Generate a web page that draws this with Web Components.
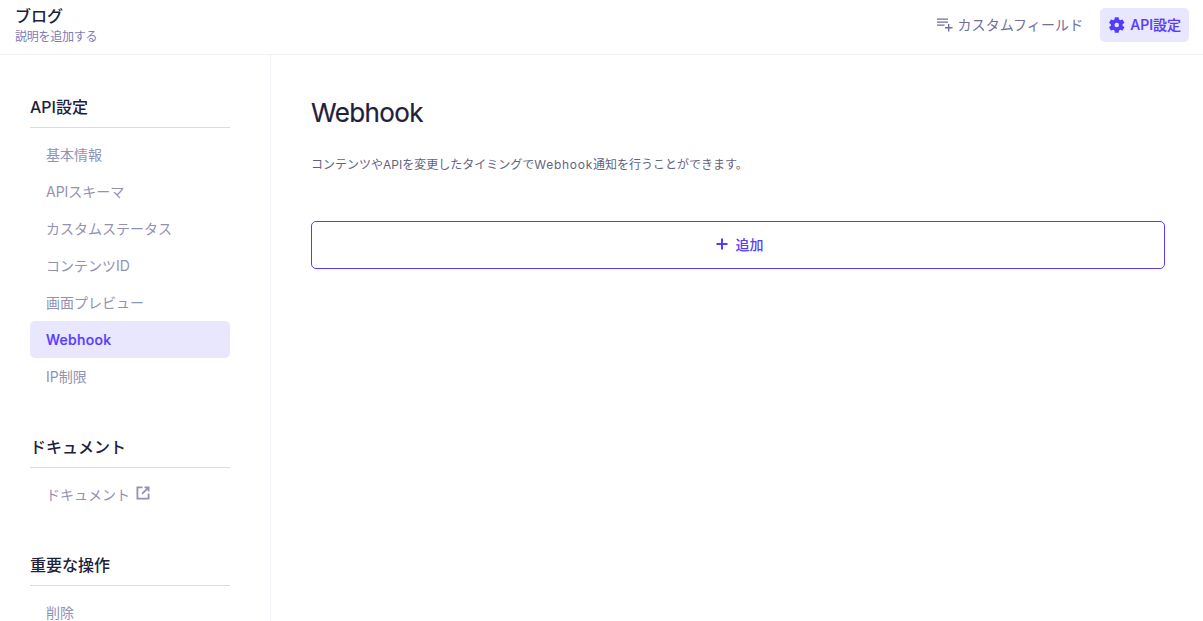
<!DOCTYPE html>
<html lang="ja"><head><meta charset="utf-8"><style>
html,body{margin:0;height:100%;overflow:hidden;background:#fff}
body{font-family:Inter,"Noto Sans CJK JP",sans-serif;color:#21213b}
</style></head><body>
<app-shell>
<app-header slot="header"></app-header>
<side-nav slot="nav">
<nav-section title="API設定">
<nav-item>基本情報</nav-item><nav-item>APIスキーマ</nav-item><nav-item>カスタムステータス</nav-item><nav-item>コンテンツID</nav-item><nav-item>画面プレビュー</nav-item><nav-item active>Webhook</nav-item><nav-item>IP制限</nav-item>
</nav-section>
<nav-section title="ドキュメント"><nav-item external>ドキュメント</nav-item></nav-section>
<nav-section title="重要な操作"><nav-item>削除</nav-item></nav-section>
</side-nav>
<webhook-page slot="main"></webhook-page>
</app-shell>
<script>
function def(name,html,init){customElements.define(name,class extends HTMLElement{constructor(){super();this.attachShadow({mode:'open'}).innerHTML=html;}connectedCallback(){init&&init(this);}});}
def('app-shell',`<style>:host{display:flex;flex-direction:column;height:621px;overflow:hidden}
.body{display:flex;flex:1;min-height:0}</style><slot name="header"></slot><div class="body"><slot name="nav"></slot><slot name="main"></slot></div>`);
def('app-header',`<style>:host{display:flex;flex:none;height:54px;border-bottom:1px solid #f0f0f7;justify-content:space-between;align-items:flex-start;padding:0 14px 0 15px;box-sizing:content-box}
.l{padding-top:6px}
.t{font-size:16px;font-weight:500;line-height:20px;color:#21213b}
.s{font-size:12px;line-height:16px;color:#7c7cb8;margin-top:3px;letter-spacing:-.25px}
.r{display:flex;align-items:center;gap:9px;padding-top:8px}
.b{display:flex;align-items:center;height:34px;padding:0 8px;border-radius:5px;font-size:14px;line-height:20px;color:#6f6f9b;gap:4px}
.b span{letter-spacing:.1px}
.b.a{background:#e9e7fd;color:#563bff;font-weight:500}
.b.a span{letter-spacing:0;-webkit-text-stroke:.2px #563bff}
svg{display:block;fill:currentColor}</style>
<div class="l"><div class="t">ブログ</div><div class="s">説明を追加する</div></div>
<div class="r"><div class="b"><svg width="16" height="16" viewBox="0 0 16 16"><path d="M0 1.500h11v1.300H0zM0 4.500h11v1.300H0zM0 7.500h7.500v1.300H0zM11 7h1.400v3h3.100v1.400h-3.100v3.100H11v-3.100H8V10h3z"/></svg><span>カスタムフィールド</span></div>
<div class="b a"><svg width="18" height="18" viewBox="0 0 24 24"><path fill-rule="evenodd" d="M19.400 13a7.800 7.800 0 0 0 0-2l2.200-1.700a.6.600 0 0 0 .13-.7l-2.100-3.600a.6.600 0 0 0-.64-.24l-2.600 1a7.600 7.600 0 0 0-1.750-1L14.250 2a.6.600 0 0 0-.52-.45H9.570a.6.600 0 0 0-.52.45l-.39 2.760a8 8 0 0 0-1.750 1l-2.600-1a.6.600 0 0 0-.64.24l-2.100 3.600a.6.600 0 0 0 .13.7L3.900 11a7.800 7.800 0 0 0 0 2l-2.200 1.700a.6.600 0 0 0-.13.7l2.100 3.600c.13.240.4.310.64.240l2.600-1c.54.410 1.130.760 1.750 1l.39 2.760c.05.260.26.450.52.450h4.160c.26 0 .48-.19.52-.45l.39-2.760a7.600 7.600 0 0 0 1.750-1l2.600 1c.24.090.51 0 .64-.24l2.100-3.600a.6.600 0 0 0-.13-.7zM11.650 15a3 3 0 1 1 0-6 3 3 0 0 1 0 6z"/></svg><span>API設定</span></div></div>`);
def('side-nav',`<style>:host{display:block;flex:none;box-sizing:content-box;border-right:1px solid #f0f0f7;padding:40px 0 0 30px;width:240px;overflow:hidden}</style><slot></slot>`);
customElements.define('nav-section',class extends HTMLElement{constructor(){super();this.attachShadow({mode:'open'}).innerHTML=`<style>:host{display:block;width:200px;margin-bottom:40px}
h2{margin:0 0 8px;font-size:16px;font-weight:500;line-height:24px;height:32px;box-sizing:content-box;border-bottom:1px solid #dcdce0;color:#21213b}
</style><h2></h2><slot></slot>`;}
connectedCallback(){this.shadowRoot.querySelector('h2').textContent=this.getAttribute('title');}});
customElements.define('nav-item',class extends HTMLElement{constructor(){super();this.attachShadow({mode:'open'}).innerHTML=`<style>:host{display:flex;align-items:center;gap:5px;height:37px;padding-left:16px;border-radius:5px;font-size:14px;line-height:20px;color:#9292b2}
:host([active]){background:#e9e7fd;color:#563bff;font-weight:500;letter-spacing:.28px;-webkit-text-stroke:.2px #563bff}
svg{display:none;fill:currentColor}
:host([external]) svg{display:block;margin-top:-3px}</style><slot></slot><svg width="16" height="16" viewBox="0 0 16 16"><path d="M1.500 1.500h6v1.800H3.300v9.400h9.400V8.500h1.800v6h-13zM9.500 1.500h5v5h-1.800V4.550L7.700 9.600 6.400 8.300l5.050-5H9.500z"/></svg>`;}});
def('webhook-page',`<style>:host{display:block;flex:none;width:854px;padding:40px 0 0 40px}
h1{margin:0;font-size:26px;font-weight:400;line-height:36px;color:#21213b;letter-spacing:-.6px;-webkit-text-stroke:.2px #21213b}
p{margin:22px 0 0;font-size:12px;line-height:24px;color:#63637f}
p span{letter-spacing:.75px}
button{display:flex;align-items:center;justify-content:center;gap:7px;width:100%;height:48px;margin-top:44px;border:1px solid #563bff;border-radius:5px;background:#fff;color:#563bff;font:500 14px/20px Inter,"Noto Sans CJK JP",sans-serif;padding:0 0 0 2px}
svg{display:block;fill:currentColor;margin-top:-2px}</style>
<h1>Webhook</h1><p>コンテンツやAPIを変更したタイミングで<span>Webhook</span>通知を行うことができます。</p>
<button><svg width="14" height="14" viewBox="0 0 14 14"><path d="M6 1.500h2V6h4.500v2H8v4.500H6V8H1.500V6H6z"/></svg><span>追加</span></button>`);
</script>
</body></html>
